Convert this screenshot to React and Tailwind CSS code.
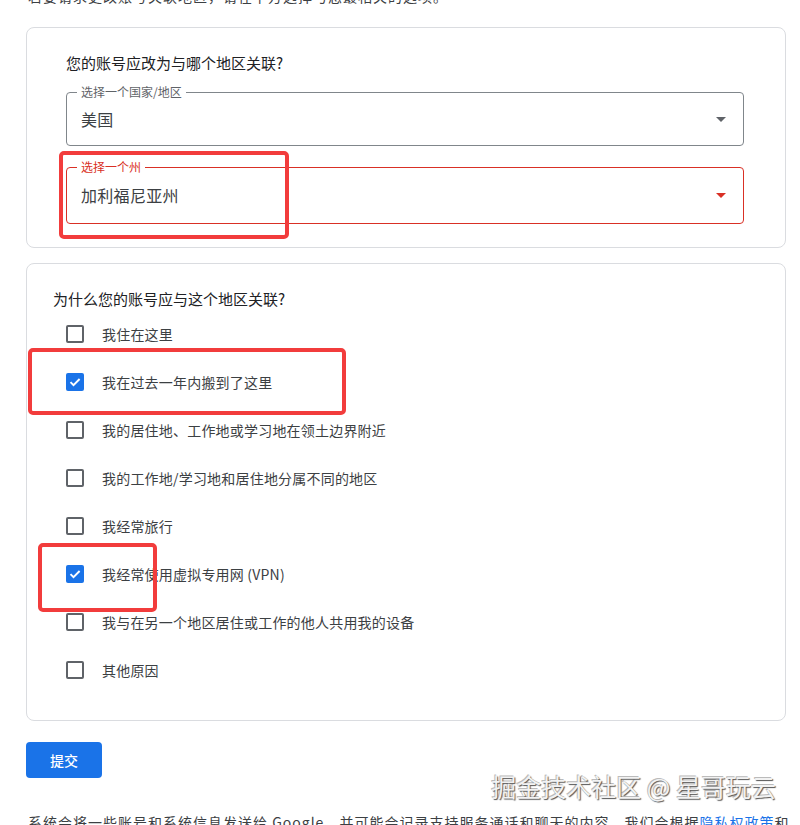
import React from "react";

const font = { fontFamily: '"Noto Sans CJK SC", "Noto Sans", Roboto, sans-serif' };

const reasons = [
    { label: "我住在这里", checked: false },
    { label: "我在过去一年内搬到了这里", checked: true },
    { label: "我的居住地、工作地或学习地在领土边界附近", checked: false },
    { label: "我的工作地/学习地和居住地分属不同的地区", checked: false },
    { label: "我经常旅行", checked: false },
    { label: "我经常使用虚拟专用网 (VPN)", checked: true },
    { label: "我与在另一个地区居住或工作的他人共用我的设备", checked: false },
    { label: "其他原因", checked: false },
];

function Arrow({ color }) {
    return (
        <svg width="10" height="5" viewBox="0 0 10 5">
            <path d="M0 0h10L5 5z" fill={color} />
        </svg>
    );
}

function SelectField({ label, value, error, className = "" }) {
    const border = error ? "border-[#d93025]" : "border-[#80868b]";
    const legendColor = error ? "text-[#d93025]" : "text-[#5f6368]";
    return (
        <fieldset className={`border ${border} rounded-[4px] pl-[10px] pr-[17px] ${className}`}>
            <legend className={`px-1 text-[12px] leading-4 ${legendColor}`}>{label}</legend>
            <div className="flex items-center justify-between h-6">
                <span className="pl-1 text-[16px] leading-6 text-[#3c4043] tracking-[0.3px]">{value}</span>
                <Arrow color={error ? "#d93025" : "#5f6368"} />
            </div>
        </fieldset>
    );
}

function Checkbox({ checked }) {
    if (checked) {
        return (
            <div className="w-[18px] h-[18px] rounded-[2px] bg-[#1a73e8] flex items-center justify-center shrink-0">
                <svg width="14" height="14" viewBox="0 0 14 14">
                    <path d="M2.5 7.2l3 3L11.6 4" fill="none" stroke="#fff" strokeWidth="1.9" />
                </svg>
            </div>
        );
    }
    return <div className="w-[18px] h-[18px] rounded-[2px] border-2 border-[#5f6368] shrink-0" />;
}

export default function App() {
    return (
        <div className="relative overflow-hidden h-[825px] w-[800px] bg-white" style={font}>
            <div className="ml-[26px] w-[760px]">
                <p className="-mt-[14px] pl-[2px] text-[14px] leading-5 tracking-[1px] text-[#3c4043] whitespace-nowrap">
                    若要请求更改账号关联地区，请在下方选择与您最相关的选项。
                </p>

                {/* Region card */}
                <div className="mt-[21px] border border-[#dadce0] rounded-lg pl-[39px] pr-[41px] pt-6 pb-[23px]">
                    <h2 className="text-[15px] leading-[22px] text-[#202124]">您的账号应改为与哪个地区关联?</h2>
                    <SelectField className="mt-[10px] pt-[7px] pb-[14px]" label="选择一个国家/地区" value="美国" />
                    <SelectField className="mt-[13px] pt-[8px] pb-[16px]" label="选择一个州" value="加利福尼亚州" error />
                </div>

                {/* Reasons card */}
                <div className="mt-[15px] border border-[#dadce0] rounded-lg pl-[26px] pr-6 pt-6 pb-[26px]">
                    <h2 className="text-[15px] leading-[22px] text-[#202124]">为什么您的账号应与这个地区关联?</h2>
                    <div className="flex flex-col pl-[13px]">
                        {reasons.map((r, idx) => (
                            <div key={idx} className="h-12 flex items-center gap-[18px]">
                                <Checkbox checked={r.checked} />
                                <span className="text-[14px] leading-5 tracking-[0.2px] text-[#3c4043]">{r.label}</span>
                            </div>
                        ))}
                    </div>
                </div>

                <button className="mt-[21px] h-9 w-[76px] rounded-[4px] bg-[#1a73e8] text-white text-[14px] font-medium">
                    提交
                </button>

                <p className="mt-[34px] pl-[2px] text-[14px] leading-5 tracking-[1px] text-[#3c4043] whitespace-nowrap">
                    系统会将一些账号和系统信息发送给 Google，并可能会记录支持服务通话和聊天的内容。我们会根据
                    <span className="text-[#1a73e8]">隐私权政策</span>和
                </p>
            </div>

            {/* annotation boxes */}
            <div className="absolute left-[59px] top-[151px] w-[230px] h-[88px] border-[4px] border-[#f23c3c] rounded-[5px]" />
            <div className="absolute left-[28px] top-[348px] w-[318px] h-[67px] border-[4px] border-[#f23c3c] rounded-[5px]" />
            <div className="absolute left-[38px] top-[543px] w-[119px] h-[69px] border-[4px] border-[#f23c3c] rounded-[5px]" />

            {/* watermark */}
            <div className="absolute right-[24px] top-[774px] text-[25px] leading-none text-[#f2f2f2] whitespace-nowrap [text-shadow:1px_1px_1px_#555,-1px_-1px_0_#bbb]">
                掘金技术社区 @ 星哥玩云
            </div>
        </div>
    );
}
